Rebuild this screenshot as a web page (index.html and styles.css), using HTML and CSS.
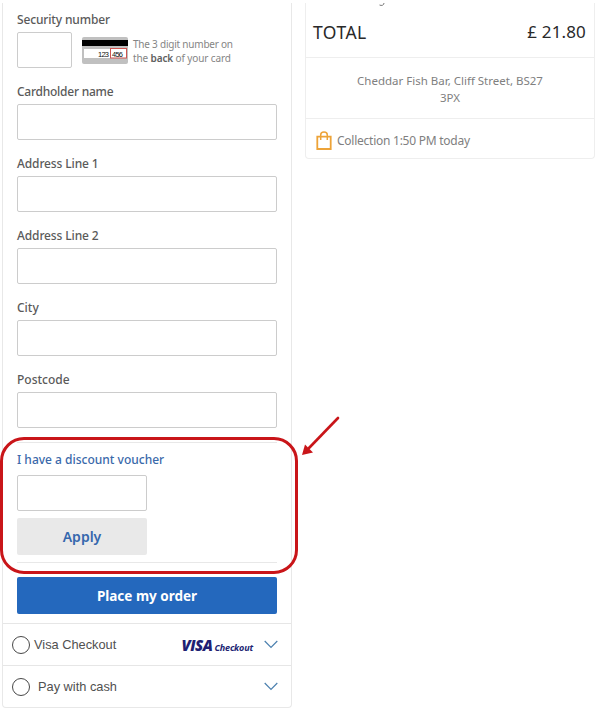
FILE: index.html
```html
<!DOCTYPE html>
<html lang="en">
<head>
<meta charset="utf-8">
<title>Payment</title>
<link rel="stylesheet" href="styles.css">
</head>
<body>
<main class="page">
  <section class="payment">
    <div class="fields">
      <div class="field">
        <label class="label l-security" for="cvv">Security number</label>
        <div class="security">
          <input class="input cvv" id="cvv">
          <svg class="card" width="46" height="27" viewBox="0 0 46 27">
            <rect width="46" height="27" rx="2" fill="#c0c0c0"/>
            <rect y="3" width="46" height="6" fill="#000"/>
            <rect x="2" y="12" width="42" height="9" fill="#fff"/>
            <text class="digits" x="16" y="19.5" textLength="11">123</text>
            <text class="digits" x="30" y="19.5" textLength="11">456</text>
            <rect x="28.5" y="11.5" width="16" height="9.5" fill="none" stroke="#cf5450"/>
          </svg>
          <p class="hint"><span class="h1">The 3 digit number on</span><br><span class="h2">the <b>back</b> of your card</span></p>
        </div>
      </div>
      <div class="field"><label class="label l-name" for="name">Cardholder name</label><input class="input" id="name"></div>
      <div class="field"><label class="label l-address" for="a1">Address Line 1</label><input class="input" id="a1"></div>
      <div class="field"><label class="label l-address" for="a2">Address Line 2</label><input class="input" id="a2"></div>
      <div class="field"><label class="label" for="city">City</label><input class="input" id="city"></div>
      <div class="field"><label class="label" for="post">Postcode</label><input class="input" id="post"></div>
      <div class="voucher">
        <label class="voucher-label" for="code">I have a discount voucher</label>
        <input class="input code" id="code">
        <button class="apply">Apply</button>
      </div>
      <button class="order">Place my order</button>
    </div>
    <div class="method">
      <span class="radio"></span><span class="visa-name">Visa Checkout</span>
      <span class="visa"><span class="visa-mark">VISA</span><span class="visa-sub">Checkout</span></span>
      <svg class="chevron" width="14" height="9" viewBox="0 0 14 9"><path d="M.7 1 7 7.5 13.3 1"/></svg>
    </div>
    <div class="method">
      <span class="radio"></span><span class="cash-name">Pay with cash</span>
      <svg class="chevron" width="14" height="9" viewBox="0 0 14 9"><path d="M.7 1 7 7.5 13.3 1"/></svg>
    </div>
  </section>
  <aside class="summary">
    <svg class="tail" width="8" height="4" viewBox="0 0 8 4"><path d="M1.5 2c2 1 4.500.3 4.500-2" fill="none" stroke="#777"/></svg>
    <div class="total"><span class="total-label">TOTAL</span><span class="amount">£ 21.80</span></div>
    <div class="address"><span>Cheddar Fish Bar, Cliff Street, BS27</span><br>3PX</div>
    <div class="collection">
      <svg width="16" height="19" viewBox="0 0 16 19" fill="none" stroke="#eda338"><path stroke-width="1.8" d="M1.300 5.700h13.400v12.300H1.300z"/><path stroke-width="1.5" d="M4.700 9V4C4.700 0 11.300 0 11.300 4v5"/></svg>
      <span>Collection 1:50 PM today</span>
    </div>
  </aside>
  <div class="highlight"></div>
  <svg class="arrow" width="40" height="41" viewBox="0 0 40 41"><path d="M37 2 8 32" stroke="#c91519" stroke-width="2.6" stroke-linecap="round"/><path d="M1 39 4 28.500 12 36.500z" fill="#c91519"/></svg>
</main>
</body>
</html>
```
FILE: styles.css
```css
* { box-sizing: border-box; }
body { margin: 0; background: #fff; font-family: "Noto Sans", sans-serif; }
.page { position: relative; display: flex; align-items: flex-start; gap: 13px; width: 597px; height: 708px; padding: 3px 0 0 2px; overflow: hidden; }
.payment { width: 290px; height: 705px; border: 1px solid #e8e8e8; border-top: 0; border-radius: 0 0 4px 4px; }
.fields { height: 620px; padding: 7px 14px 0; }
.field { height: 72px; }
.label, .voucher-label { display: block; height: 22px; font-size: 12px; font-weight: 500; line-height: 19px; color: #5a5a5a; white-space: nowrap; }
.l-security { letter-spacing: -.15px; }
.l-name { letter-spacing: -.25px; }
.l-address { letter-spacing: -.12px; }
.input { display: block; width: 260px; height: 36px; padding: 0 8px; border: 1px solid #ccc; border-radius: 2px; background: #fff; font: inherit; outline: 0; }
.security { display: flex; align-items: flex-start; }
.cvv { width: 55px; }
.card { margin: 5px 5px 0 10px; flex: none; }
.digits { font: 7.5px "Liberation Sans", sans-serif; fill: #111; }
.hint { margin: 5px 0 0; font-size: 10px; line-height: 14px; letter-spacing: -.22px; color: #858585; white-space: nowrap; }
.h2 { letter-spacing: -.12px; }
.hint b { font-weight: 600; color: #606060; }
.voucher { height: 121px; border: solid #e8e8e8; border-width: 1px 0; padding-top: 7px; }
.voucher-label { height: 25px; color: #3a69aa; font-weight: 500; }
.code { width: 130px; }
.apply { display: block; width: 130px; height: 37px; margin-top: 7px; border: 0; border-radius: 2px; background: #e9e9e9; color: #3567ad; font: 600 14px "Noto Sans", sans-serif; padding: 0; }
.order { display: block; width: 260px; height: 37px; margin-top: 14px; border: 0; border-radius: 2px; background: #2468bd; color: #fff; font: 700 13.5px "Noto Sans", sans-serif; padding: 0; }
.method { display: flex; align-items: center; height: 42px; padding: 0 13px 0 9px; border-top: 1px solid #e6e6e6; font: 12.8px "Liberation Sans", sans-serif; color: #505050; }
.radio { width: 18px; height: 18px; border: 1px solid #484848; border-radius: 50%; }
.visa-name { margin-left: 4px; }
.cash-name { margin-left: 8px; }
.visa { display: flex; align-items: baseline; gap: 2px; margin-left: auto; color: #211f73; font-family: "Open Sans", sans-serif; font-style: italic; font-weight: 700; }
.visa-mark { font-size: 15px; font-weight: 800; letter-spacing: -.5px; }
.visa-sub { font-size: 9px; letter-spacing: -.15px; }
.chevron { margin-left: auto; fill: none; stroke: #4c80af; stroke-width: 1.2; }
.visa + .chevron { margin-left: 11px; }
.summary { width: 290px; height: 156px; border: 1px solid #eee; border-top: 0; border-radius: 0 0 4px 4px; }
.tail { display: block; margin-left: 72px; }
.total { display: flex; justify-content: space-between; height: 50px; padding: 12px 8px 0 7px; font-size: 17px; line-height: 26px; color: #292929; }
.total-label { font-size: 17.5px; letter-spacing: .45px; }
.amount { font-size: 17px; letter-spacing: .15px; }
.address { height: 61px; padding-top: 14px; border-top: 1px solid #eee; text-align: center; font-size: 11.5px; line-height: 17px; color: #808080; }
.collection { display: flex; align-items: center; gap: 5px; height: 40px; padding: 4px 10px 0; border-top: 1px solid #eee; font-size: 12px; letter-spacing: -.25px; color: #808080; }
.highlight { position: absolute; left: 0; top: 437px; width: 298px; height: 137px; border: 3px solid #c91519; border-radius: 24px; pointer-events: none; }
.arrow { position: absolute; left: 301px; top: 416px; fill: none; }
```
